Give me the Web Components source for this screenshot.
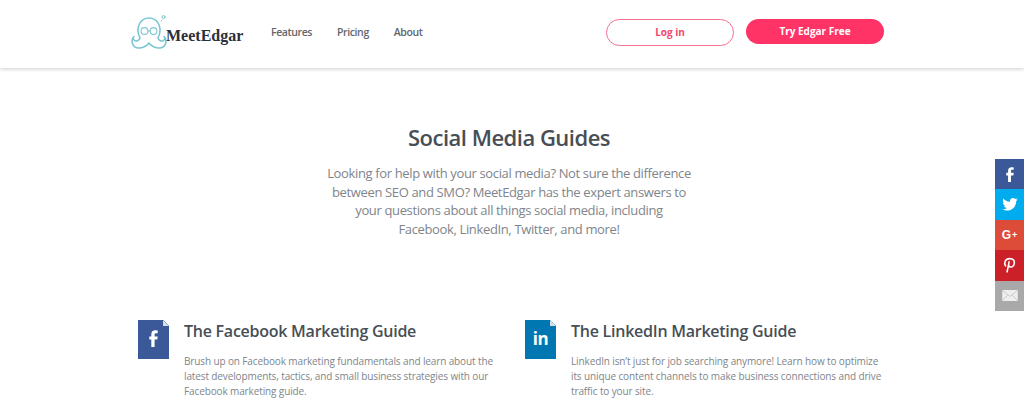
<!DOCTYPE html>
<html>
<head>
<meta charset="utf-8">
<style>
    html, body { margin: 0; height: 401px; overflow: hidden; background: #fff; font-family: "Open Sans", sans-serif; }
</style>
</head>
<body>
<site-header></site-header>
<guide-intro heading="Social Media Guides">
    Looking for help with your social media? Not sure the difference<br>
    between SEO and SMO? MeetEdgar has the expert answers to<br>
    your questions about all things social media, including<br>
    Facebook, LinkedIn, Twitter, and more!
</guide-intro>
<guide-list>
    <guide-card heading="The Facebook Marketing Guide" color="#3b5998">
        <svg slot="icon" width="9" height="17" viewBox="0 0 8.400 17" fill="#fff"><path d="M5.300 17V9.500H8l.4-3H5.300V4.700c0-.9.3-1.500 1.500-1.500h1.600V.5C8 .4 7 .3 5.900 .3 3.500 .3 2 1.700 2 4.200v2.300H0v3h2V17z"/></svg>
        Brush up on Facebook marketing fundamentals and learn about the<br>
        latest developments, tactics, and small business strategies with our<br>
        Facebook marketing guide.
    </guide-card>
    <guide-card heading="The LinkedIn Marketing Guide" color="#0077b0">
        <span slot="icon">in</span>
        LinkedIn isn’t just for job searching anymore! Learn how to optimize<br>
        its unique content channels to make business connections and drive<br>
        traffic to your site.
    </guide-card>
</guide-list>
<share-bar></share-bar>

<script>
const HeaderTemplate = document.createElement('template');
HeaderTemplate.innerHTML = `
    <style>
        :host {
            display: flex;
            align-items: flex-start;
            height: 68px;
            box-sizing: border-box;
            padding: 14px 140px 0 129px;
            background: #fff;
            box-shadow: 0 1px 4px rgba(0,0,0,.2);
            position: relative;
        }
        .logo { display: flex; align-items: flex-start; width: 114px; height: 36px; }
        .logo svg { flex: none; margin-right: -1px; }
        .logo span {
            font: bold 16px "Liberation Serif", serif;
            color: #2c2f3a;
            margin-top: 13px;
            white-space: nowrap;
        }
        nav { display: flex; gap: 25px; margin-left: 28px; padding-top: 11px; font-size: 10.500px; letter-spacing: -.4px; font-weight: 600; color: #63666c; line-height: 15px; }
        .actions { margin-left: auto; display: flex; align-items: flex-start; gap: 12px; padding-top: 5px; }
        .btn { box-sizing: border-box; border-radius: 14px; font-size: 10px; font-weight: 700; text-align: center; }
        .login { width: 128px; height: 27px; line-height: 25px; border: 1px solid #f4708f; color: #f2476f; }
        .try { width: 138px; height: 25px; line-height: 25px; background: #ff3366; color: #fff; }
    </style>
    <div class="logo">
        <svg width="38" height="36" viewBox="0 0 38 36" fill="none" stroke="#7cc6d4" stroke-width="1.600" stroke-linecap="round" stroke-linejoin="round">
            <circle cx="34.500" cy="3" r="1.500" stroke-width="1"/>
            <path d="M32 7l1-1" stroke-width="1"/>
            <path d="M11 24C6 14 11 4 20 4s14 10 9 20c1 3 4 4 6 2 1-1 1-2.500 0-3.500 3 2.500 3 10.500-4 11.500-4 .5-9-2-11-5-2 3-7 5.500-11 5-7-1-7-9-4-11.500-1 1-1 2.500 0 3.500 2 2 5 1 6-2z"/>
            <circle cx="15.500" cy="17" r="3.400" stroke-width="1.100"/>
            <circle cx="24.500" cy="17" r="3.400" stroke-width="1.100"/>
            <path d="M18.900 17h2.200" stroke-width="1.100"/>
        </svg>
        <span>MeetEdgar</span>
    </div>
    <nav><span>Features</span><span>Pricing</span><span>About</span></nav>
    <div class="actions">
        <div class="btn login">Log in</div>
        <div class="btn try">Try Edgar Free</div>
    </div>
`;

class SiteHeader extends HTMLElement {
    constructor() {
        super();
        this.attachShadow({mode: 'open'}).appendChild(HeaderTemplate.content.cloneNode(true));
    }
}
customElements.define('site-header', SiteHeader);

const IntroTemplate = document.createElement('template');
IntroTemplate.innerHTML = `
    <style>
        :host { display: block; text-align: center; padding: 53px 0 0 2px; width: 1016px; box-sizing: border-box; }
        h1 { margin: 0 0 11px; font-size: 22px; letter-spacing: -.5px; line-height: 32px; font-weight: 600; color: #484e55; }
        p { margin: 0; font-size: 13px; letter-spacing: -.36px; line-height: 18.500px; color: #80858b; }
    </style>
    <h1></h1>
    <p><slot></slot></p>
`;

class GuideIntro extends HTMLElement {
    constructor() {
        super();
        this.attachShadow({mode: 'open'}).appendChild(IntroTemplate.content.cloneNode(true));
        this.shadowRoot.querySelector('h1').textContent = this.getAttribute('heading');
    }
}
customElements.define('guide-intro', GuideIntro);

const ListTemplate = document.createElement('template');
ListTemplate.innerHTML = `
    <style>
        :host { display: flex; padding: 82px 0 0 138px; }
    </style>
    <slot></slot>
`;

class GuideList extends HTMLElement {
    constructor() {
        super();
        this.attachShadow({mode: 'open'}).appendChild(ListTemplate.content.cloneNode(true));
    }
}
customElements.define('guide-list', GuideList);

const CardTemplate = document.createElement('template');
CardTemplate.innerHTML = `
    <style>
        :host { display: flex; width: 387px; flex: none; }
        .doc {
            position: relative;
            box-sizing: border-box;
            width: 31px; height: 39px; flex: none; margin-right: 15px;
            padding-bottom: 2px;
            display: flex; align-items: center; justify-content: center;
            background: var(--doc-color);
            clip-path: polygon(0 0, 25px 0, 31px 6px, 31px 39px, 0 39px);
            color: #fff;
            font: 700 17px/1 "Open Sans", sans-serif;
            letter-spacing: -.5px;
        }
        .doc::after {
            content: "";
            position: absolute; right: 0; top: 0;
            width: 6px; height: 6px;
            background: linear-gradient(45deg, #d8dde6 50%, transparent 50%);
        }
        h2 { margin: -1px 0 11px; font-size: 16px; letter-spacing: -.25px; line-height: 24px; font-weight: 600; color: #484e55; white-space: nowrap; }
        p { margin: 0; font-size: 10px; letter-spacing: -.12px; line-height: 15px; color: #80858b; white-space: nowrap; }
    </style>
    <div class="doc"><slot name="icon"></slot></div>
    <div>
        <h2></h2>
        <p><slot></slot></p>
    </div>
`;

class GuideCard extends HTMLElement {
    constructor() {
        super();
        this.attachShadow({mode: 'open'}).appendChild(CardTemplate.content.cloneNode(true));
        this.shadowRoot.querySelector('.doc').style.setProperty('--doc-color', this.getAttribute('color'));
        this.shadowRoot.querySelector('h2').textContent = this.getAttribute('heading');
    }
}
customElements.define('guide-card', GuideCard);

const ShareTemplate = document.createElement('template');
ShareTemplate.innerHTML = `
    <style>
        :host { position: fixed; right: 0; top: 159px; width: 29px; display: flex; flex-direction: column; }
        div { height: 30.400px; display: flex; align-items: center; justify-content: center; color: #fff; }
        .fb { background: #3b5998; }
        .tw { background: #00aced; }
        .gp { background: #dd4b39; font: bold 12px "Liberation Sans", sans-serif; }
        .gp small { font-size: 9px; margin-left: 1px; }
        .pi { background: #cb2027; }
        .em { background: #a9a9a9; }
    </style>
    <div class="fb">
        <svg width="8" height="15" viewBox="0 0 8.400 17" fill="#fff"><path d="M5.300 17V9.500H8l.4-3H5.300V4.700c0-.9.3-1.500 1.500-1.500h1.600V.5C8 .4 7 .3 5.900 .3 3.500 .3 2 1.700 2 4.200v2.300H0v3h2V17z"/></svg>
    </div>
    <div class="tw">
        <svg width="16" height="13" viewBox="0 0 24 20" fill="#fff"><path d="M24 2.400c-.9.4-1.800.7-2.800.8 1-.6 1.800-1.600 2.200-2.700-1 .6-2 1-3.100 1.200C19.300.7 18 0 16.600 0c-2.700 0-4.900 2.200-4.900 4.900 0 .4 0 .8.1 1.100C7.700 5.800 4.100 3.800 1.700.9c-.4.7-.7 1.600-.7 2.500 0 1.700.9 3.200 2.200 4.100-.8 0-1.600-.2-2.200-.6v.1c0 2.400 1.700 4.400 3.900 4.800-.4.1-.8.2-1.300.2-.3 0-.6 0-.9-.1.6 2 2.400 3.400 4.600 3.400-1.700 1.300-3.800 2.100-6.100 2.100-.4 0-.8 0-1.200-.1C2.200 18.300 4.800 19.200 7.500 19.200c9.100 0 14-7.500 14-14v-.6c1-.7 1.800-1.500 2.500-2.200z"/></svg>
    </div>
    <div class="gp">G<small>+</small></div>
    <div class="pi">
        <svg width="13" height="16" viewBox="0 0 16 20" fill="none" stroke="#fff" stroke-width="2" stroke-linecap="round"><path d="M3 11C1 8 2 2 8.500 2c4.500 0 6 3 5.500 6-.5 3-2.500 5-5 4.500-1.500-.3-2-1.500-2-2.500M7.500 6L5 18.500"/></svg>
    </div>
    <div class="em">
        <svg width="16" height="11" viewBox="0 0 17 12"><rect width="17" height="12" rx="1" fill="#eee"/><path d="M.5 .8L8.500 7l8-6.200M.5 11.200l5.500-5.500M16.500 11.200l-5.500-5.500" fill="none" stroke="#bdbdbd" stroke-width=".8"/></svg>
    </div>
`;

class ShareBar extends HTMLElement {
    constructor() {
        super();
        this.attachShadow({mode: 'open'}).appendChild(ShareTemplate.content.cloneNode(true));
    }
}
customElements.define('share-bar', ShareBar);
</script>
</body>
</html>
